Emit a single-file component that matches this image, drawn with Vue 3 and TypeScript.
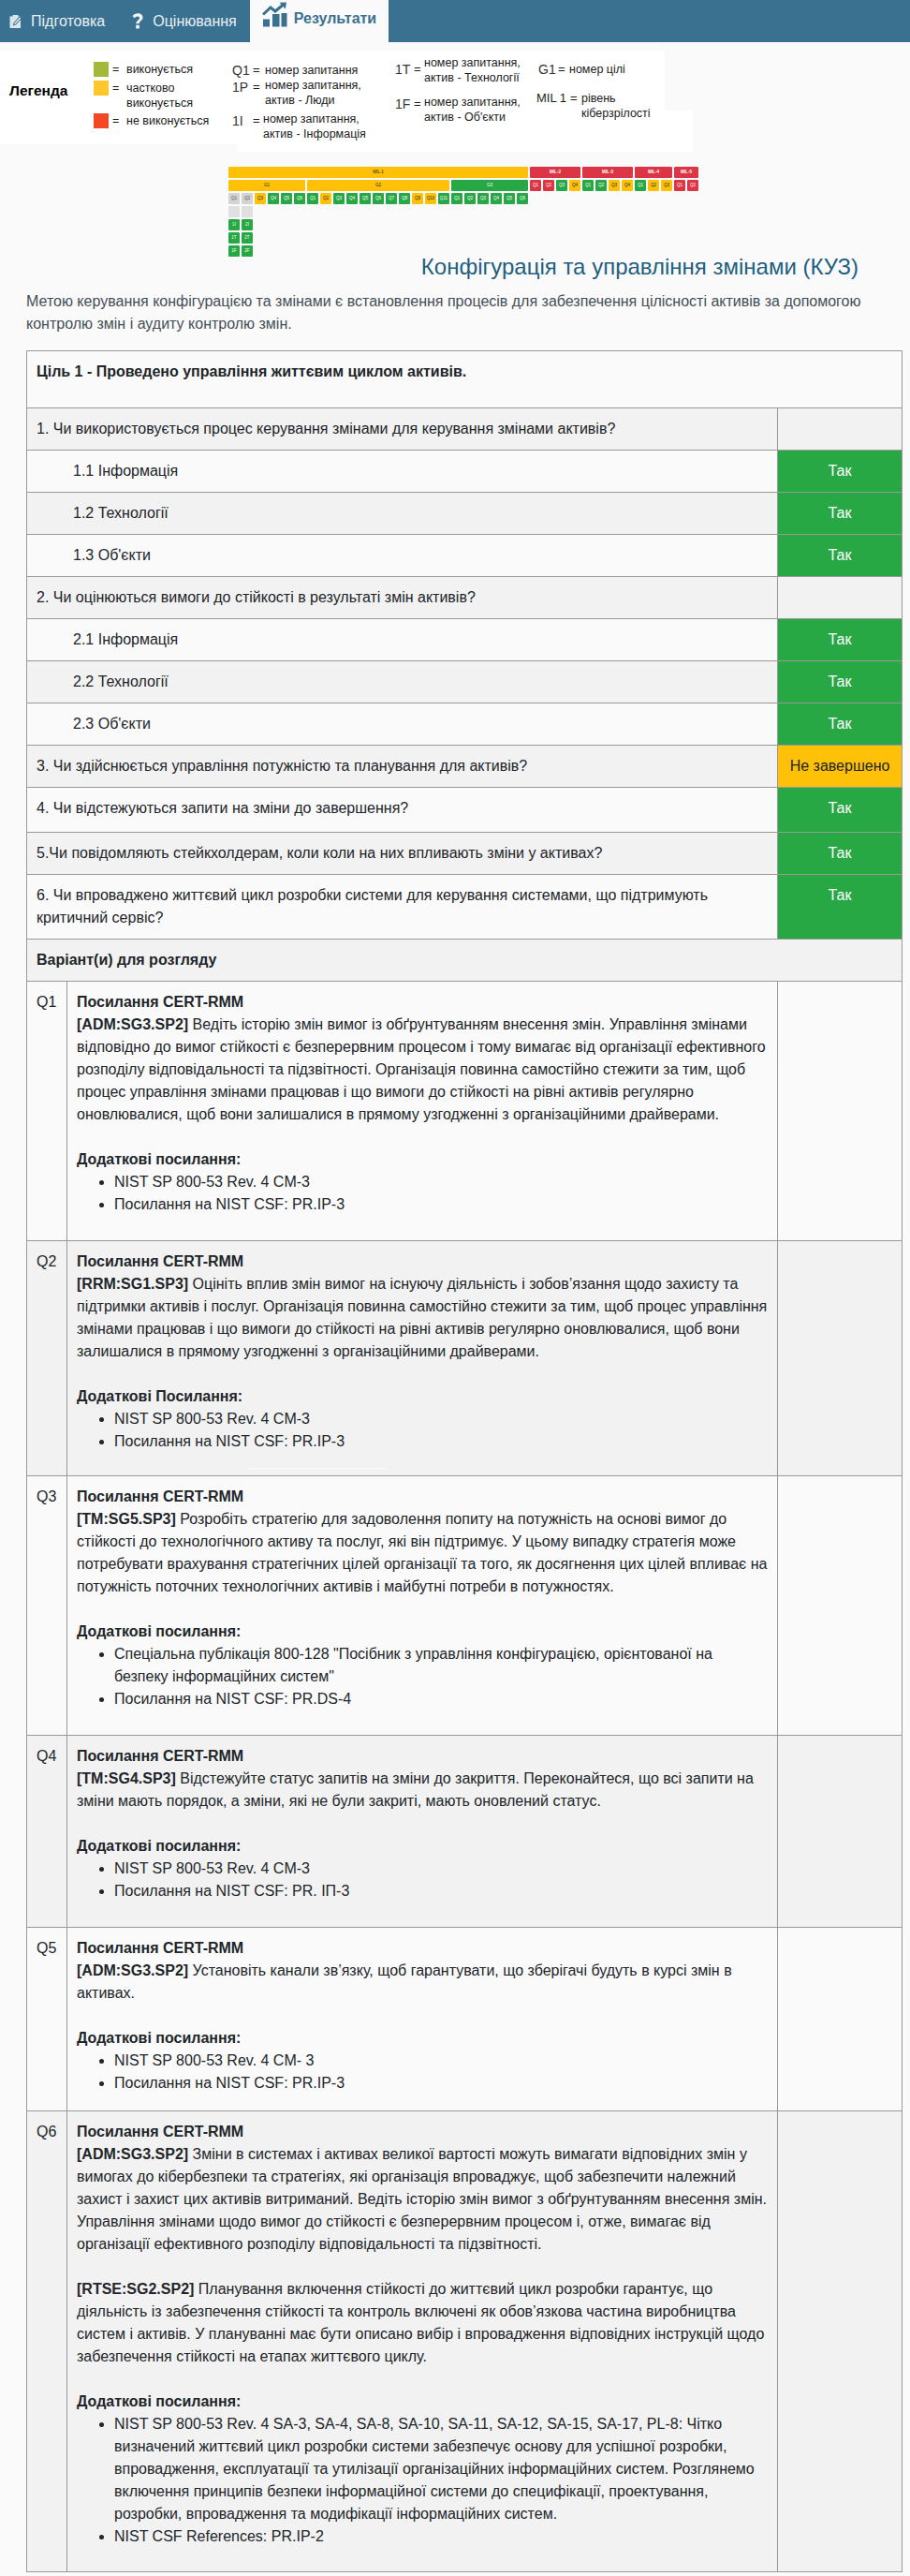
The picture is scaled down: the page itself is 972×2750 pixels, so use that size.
<template>
  <div class="page">
    <nav class="tabs">
      <a class="tab tab--first">
        <svg class="tab__icon" width="16" height="17" viewBox="0 0 16 17">
          <path d="M1.5 3.5h3v-1.500h6v1.500h2.500v12.500h-11.500z" fill="#dbe6eb" />
          <path d="M5.500 10.500l6.500-7.500 2.500 2.200-6.500 7.300-3.200 1z" fill="#3a7191" />
          <path d="M6.500 10.800l5.600-6.300 1 .9-5.600 6.200-1.600.5z" fill="#f4f7f8" />
        </svg>
        Підготовка
      </a>
      <a class="tab tab--second">
        <svg class="tab__icon" width="12" height="17" viewBox="0 0 12 17">
          <path d="M4.400 11.200c-.1-3.400 3.600-3.800 3.600-6 0-1.100-.9-1.800-2.100-1.800-1.300 0-2.300.7-3.100 1.800L.5 3.200C1.800 1.300 3.700.3 6.200.3c3 0 5.300 1.600 5.300 4.500 0 3.400-4 3.800-3.800 6.400zM4.200 12.800h3.700v3.700H4.200z" fill="#f1f5f7" />
        </svg>
        Оцінювання
      </a>
      <a class="tab tab--active">
        <svg class="tab__icon" width="27" height="27" viewBox="0 0 27 27">
          <path d="M1 18.500h7v8H1zM11 13h7.500v13.500H11zM20.500 12H26.500v14.500h-6z" fill="#3a7191" />
          <path d="M1 13.500l8-7.500 5 4 8.500-7" fill="none" stroke="#3a7191" stroke-width="3" />
          <path d="M18.500.8l7.500-.3-1.200 7z" fill="#3a7191" />
        </svg>
        Результати
      </a>
    </nav>

    <section class="legend">
      <strong class="legend__title">Легенда</strong>
      <div class="legend__col legend__col--status">
        <div class="entry entry--status entry--done">
          <i class="swatch swatch--green"></i><span>=</span><span>виконується</span>
        </div>
        <div class="entry entry--status entry--part">
          <i class="swatch swatch--yellow"></i><span>=</span><span>частково<br />виконується</span>
        </div>
        <div class="entry entry--status">
          <i class="swatch swatch--red"></i><span>=</span><span>не виконується</span>
        </div>
      </div>
      <div class="legend__col legend__col--keys">
        <div class="entry entry--key">
          <b class="key">Q1</b><span class="eq">=</span><span>номер запитання</span>
        </div>
        <div class="entry entry--key entry--people">
          <b class="key key--low">1P</b><span class="eq eq--low">=</span><span>номер запитання,<br />актив - Люди</span>
        </div>
        <div class="entry entry--key entry--info">
          <b class="key key--low">1I</b><span class="eq eq--low">=</span><span>номер запитання,<br />актив - Інформація</span>
        </div>
      </div>
      <div class="legend__col legend__col--assets">
        <div class="entry entry--asset entry--tech">
          <b class="key key--tech">1T</b><span class="eq key--tech">=</span><span>номер запитання,<br />актив - Технології</span>
        </div>
        <div class="entry entry--asset">
          <b class="key key--low">1F</b><span class="eq eq--low">=</span><span>номер запитання,<br />актив - Об'єкти</span>
        </div>
      </div>
      <div class="legend__col legend__col--goals">
        <div class="entry entry--goal">
          <b class="key">G1</b><span class="eq">=</span><span>номер цілі</span>
        </div>
        <div class="entry entry--mil">
          <b class="key key--small">MIL 1</b><span class="eq">=</span><span>рівень<br />кіберзрілості</span>
        </div>
      </div>
    </section>

    <section class="chart">
      <div v-for="mil in mils" :key="mil.name" class="mil">
        <div class="bar" :class="'is-' + mil.color">{{ mil.name }}</div>
        <div class="mil__goals">
          <div v-for="(goal, g) in mil.goals" :key="g" class="goal">
            <div v-if="goal.name" class="bar" :class="'is-' + goal.color">{{ goal.name }}</div>
            <div class="goal__cells">
              <div v-for="(q, i) in goal.cells" :key="i" class="stack">
                <div class="cell" :class="'is-' + q.color">{{ q.label }}</div>
                <template v-if="q.subs">
                  <div class="cell is-empty"></div>
                  <div v-for="s in q.subs" :key="s" class="cell is-green">{{ s }}</div>
                </template>
              </div>
            </div>
          </div>
        </div>
      </div>
    </section>

    <h2 class="heading">Конфігурація та управління змінами (КУЗ)</h2>
    <p class="intro">
      Метою керування конфігурацією та змінами є встановлення процесів для забезпечення цілісності активів за
      допомогою контролю змін і аудиту контролю змін.
    </p>

    <table class="sheet">
      <colgroup>
        <col class="sheet__q" />
        <col class="sheet__body" />
        <col class="sheet__state" />
      </colgroup>
      <tbody>
        <tr>
          <td colspan="3" class="goal-row"><strong>Ціль 1 - Проведено управління життєвим циклом активів.</strong></td>
        </tr>
        <tr v-for="row in questions" :key="row.text" :class="{ 'row--tall': row.tall }">
          <td colspan="2" :class="{ sub: row.sub }">{{ row.text }}</td>
          <td class="state" :class="row.state ? 'state--' + row.state : ''">{{ stateText(row.state) }}</td>
        </tr>
        <tr>
          <td colspan="3"><strong>Варіант(и) для розгляду</strong></td>
        </tr>
        <tr v-for="item in refs" :key="item.id">
          <td>{{ item.id }}</td>
          <td>
            <strong>Посилання CERT-RMM</strong>
            <p v-for="p in item.paragraphs" :key="p.code" class="ref-par">
              <strong>{{ p.code }}</strong> {{ p.text }}
            </p>
            <strong>{{ item.moreTitle }}</strong>
            <ul class="ref-list" :style="{ marginBottom: item.tail + 'px' }">
              <li v-for="l in item.links" :key="l">{{ l }}</li>
            </ul>
          </td>
          <td></td>
        </tr>
      </tbody>
    </table>
  </div>
</template>

<script setup lang="ts">
type Color = 'green' | 'yellow' | 'red' | 'grey'
type State = 'yes' | 'partial' | ''

interface Cell { label: string; color: Color; subs?: string[] }
interface Goal { name?: string; color?: Color; cells: Cell[] }
interface Mil { name: string; color: Color; goals: Goal[] }

function cells(colors: string): Cell[] {
  const map: Record<string, Color> = { g: 'green', y: 'yellow', r: 'red', n: 'grey' }
  return colors.split('').map((c, i) => ({ label: 'Q' + (i + 1), color: map[c] }))
}

const firstGoal = cells('nnyggg')
firstGoal[0].subs = ['1I', '1T', '1F']
firstGoal[1].subs = ['2I', '2T', '2F']

const mils: Mil[] = [
  {
    name: 'MIL-1',
    color: 'yellow',
    goals: [
      { name: 'G1', color: 'yellow', cells: firstGoal },
      { name: 'G2', color: 'yellow', cells: cells('gyggggggyyg') },
      { name: 'G3', color: 'green', cells: cells('gggggg') },
    ],
  },
  { name: 'MIL-2', color: 'red', goals: [{ cells: cells('rrgy') }] },
  { name: 'MIL-3', color: 'red', goals: [{ cells: cells('ggyy') }] },
  { name: 'MIL-4', color: 'red', goals: [{ cells: cells('gyy') }] },
  { name: 'MIL-5', color: 'red', goals: [{ cells: cells('rr') }] },
]

const questions: { text: string; state: State; sub?: boolean; tall?: boolean }[] = [
  { text: '1. Чи використовується процес керування змінами для керування змінами активів?', state: '' },
  { text: '1.1 Інформація', state: 'yes', sub: true },
  { text: '1.2 Технології', state: 'yes', sub: true },
  { text: "1.3 Об'єкти", state: 'yes', sub: true },
  { text: '2. Чи оцінюються вимоги до стійкості в результаті змін активів?', state: '' },
  { text: '2.1 Інформація', state: 'yes', sub: true },
  { text: '2.2 Технології', state: 'yes', sub: true },
  { text: "2.3 Об'єкти", state: 'yes', sub: true },
  { text: '3. Чи здійснюється управління потужністю та планування для активів?', state: 'partial' },
  { text: '4. Чи відстежуються запити на зміни до завершення?', state: 'yes', tall: true },
  { text: '5.Чи повідомляють стейкхолдерам, коли коли на них впливають зміни у активах?', state: 'yes' },
  { text: '6. Чи впроваджено життєвий цикл розробки системи для керування системами, що підтримують критичний сервіс?', state: 'yes' },
]

function stateText(state: State): string {
  if (state === 'yes') return 'Так'
  if (state === 'partial') return 'Не завершено'
  return ''
}

const refs = [
  {
    id: 'Q1',
    paragraphs: [
      {
        code: '[ADM:SG3.SP2]',
        text: 'Ведіть історію змін вимог із обґрунтуванням внесення змін. Управління змінами відповідно до вимог стійкості є безперервним процесом і тому вимагає від організації ефективного розподілу відповідальності та підзвітності. Організація повинна самостійно стежити за тим, щоб процес управління змінами працював і що вимоги до стійкості на рівні активів регулярно оновлювалися, щоб вони залишалися в прямому узгодженні з організаційними драйверами.',
      },
    ],
    moreTitle: 'Додаткові посилання:',
    links: ['NIST SP 800-53 Rev. 4 CM-3', 'Посилання на NIST CSF: PR.IP-3'],
    tail: 16,
  },
  {
    id: 'Q2',
    paragraphs: [
      {
        code: '[RRM:SG1.SP3]',
        text: 'Оцініть вплив змін вимог на існуючу діяльність і зобов’язання щодо захисту та підтримки активів і послуг. Організація повинна самостійно стежити за тим, щоб процес управління змінами працював і що вимоги до стійкості на рівні активів регулярно оновлювалися, щоб вони залишалися в прямому узгодженні з організаційними драйверами.',
      },
    ],
    moreTitle: 'Додаткові Посилання:',
    links: ['NIST SP 800-53 Rev. 4 CM-3', 'Посилання на NIST CSF: PR.IP-3'],
    tail: 14,
  },
  {
    id: 'Q3',
    paragraphs: [
      {
        code: '[TM:SG5.SP3]',
        text: 'Розробіть стратегію для задоволення попиту на потужність на основі вимог до стійкості до технологічного активу та послуг, які він підтримує. У цьому випадку стратегія може потребувати врахування стратегічних цілей організації та того, як досягнення цих цілей впливає на потужність поточних технологічних активів і майбутні потреби в потужностях.',
      },
    ],
    moreTitle: 'Додаткові посилання:',
    links: [
      'Спеціальна публікація 800-128 "Посібник з управління конфігурацією, орієнтованої на безпеку інформаційних систем"',
      'Посилання на NIST CSF: PR.DS-4',
    ],
    tail: 16,
  },
  {
    id: 'Q4',
    paragraphs: [
      {
        code: '[TM:SG4.SP3]',
        text: 'Відстежуйте статус запитів на зміни до закриття. Переконайтеся, що всі запити на зміни мають порядок, а зміни, які не були закриті, мають оновлений статус.',
      },
    ],
    moreTitle: 'Додаткові посилання:',
    links: ['NIST SP 800-53 Rev. 4 CM-3', 'Посилання на NIST CSF: PR. ІП-3'],
    tail: 16,
  },
  {
    id: 'Q5',
    paragraphs: [
      {
        code: '[ADM:SG3.SP2]',
        text: 'Установіть канали зв’язку, щоб гарантувати, що зберігачі будуть в курсі змін в активах.',
      },
    ],
    moreTitle: 'Додаткові посилання:',
    links: ['NIST SP 800-53 Rev. 4 CM- 3', 'Посилання на NIST CSF: PR.IP-3'],
    tail: 7,
  },
  {
    id: 'Q6',
    paragraphs: [
      {
        code: '[ADM:SG3.SP2]',
        text: 'Зміни в системах і активах великої вартості можуть вимагати відповідних змін у вимогах до кібербезпеки та стратегіях, які організація впроваджує, щоб забезпечити належний захист і захист цих активів витриманий. Ведіть історію змін вимог з обґрунтуванням внесення змін. Управління змінами щодо вимог до стійкості є безперервним процесом і, отже, вимагає від організації ефективного розподілу відповідальності та підзвітності.',
      },
      {
        code: '[RTSE:SG2.SP2]',
        text: 'Планування включення стійкості до життєвий цикл розробки гарантує, що діяльність із забезпечення стійкості та контроль включені як обов’язкова частина виробництва систем і активів. У плануванні має бути описано вибір і впровадження відповідних інструкцій щодо забезпечення стійкості на етапах життєвого циклу.',
      },
    ],
    moreTitle: 'Додаткові посилання:',
    links: [
      'NIST SP 800-53 Rev. 4 SA-3, SA-4, SA-8, SA-10, SA-11, SA-12, SA-15, SA-17, PL-8: Чітко визначений життєвий цикл розробки системи забезпечує основу для успішної розробки, впровадження, експлуатації та утилізації організаційних інформаційних систем. Розглянемо включення принципів безпеки інформаційної системи до специфікації, проектування, розробки, впровадження та модифікації інформаційних систем.',
      'NIST CSF References: PR.IP-2',
    ],
    tail: 15,
  },
]
</script>

<style>
body { background: #fafafa; }
</style>

<style scoped>
.page { position: relative; width: 972px; font-family: "Liberation Sans", Arial, sans-serif; font-size: 16px; line-height: 24px; color: #212529; }
/* stray rule that sits over the Q2 row */
.page::after { content: ""; position: absolute; top: 1567px; left: 265px; width: 148px; height: 1px; background: #fafafa; }

.tabs { display: flex; height: 45px; background: #3a7191; color: #e9f0f3; }
.tab { display: flex; align-items: center; gap: 8px; height: 45px; }
.tab--first { padding-left: 9px; }
.tab--second { margin-left: 29px; gap: 10px; }
.tab--active { margin-left: 14px; width: 148px; padding: 0 0 0 13px; gap: 7px; box-sizing: border-box; background: #fafafa; color: #3a7191; font-weight: 700; align-items: flex-start; }
.tab--active { line-height: 40px; }
.tab__icon { flex: none; }
.tab--active .tab__icon { margin-top: 2px; }

.legend {
  display: flex; width: 740px; height: 108px; margin-top: 9px; font-size: 12.5px; line-height: 16px; color: #1b1b1b;
  background:
    linear-gradient(#fff, #fff) 0 0 / 710px 64px no-repeat,
    linear-gradient(#fff, #fff) 0 64px / 254px 36px no-repeat,
    linear-gradient(#fff, #fff) 254px 64px / 486px 44px no-repeat;
}
.legend__title { flex: none; width: 100px; box-sizing: border-box; padding: 33px 0 0 10px; font-size: 15.5px; line-height: 20px; color: #000; }
.legend__col { flex: none; }
.legend__col--status { width: 148px; padding-top: 12px; }
.legend__col--keys { width: 174px; padding-top: 13px; }
.legend__col--assets { width: 151px; padding-top: 5px; }
.legend__col--goals { padding-top: 12px; }
.entry { display: grid; }
.entry--status { grid-template-columns: 20px 15px auto; }
.entry--done { margin-bottom: 4px; }
.entry--part { margin-bottom: 3px; }
.entry--key { grid-template-columns: 22px 13px auto; }
.entry--people { margin-bottom: 4px; }
.entry--info { grid-template-columns: 22px 11px auto; }
.entry--asset { grid-template-columns: 20px 11px auto; }
.entry--tech { margin-bottom: 10px; }
.entry--goal { grid-template-columns: 21px 12px auto; padding-left: 2px; margin-bottom: 15px; }
.entry--mil { grid-template-columns: 36px 12px auto; }
.swatch { display: block; width: 16px; height: 16px; }
.swatch--green { background: #a2b93a; }
.swatch--yellow { background: #ffc72c; }
.swatch--red { background: #f44725; }
.key { font-weight: 400; font-size: 14px; color: #333; }
.key--small { font-size: 13px; color: #1b1b1b; }
.eq { font-size: 13px; }
.key--low, .eq--low { padding-top: 2px; }
.key--tech { padding-top: 7px; }

.chart { display: flex; gap: 2px; height: 96px; margin-top: 16px; padding-left: 244px; font-size: 4.6px; line-height: 12px; text-align: center; }
.mil { display: flex; flex-direction: column; gap: 2px; }
.mil__goals { display: flex; gap: 2px; }
.goal { display: flex; flex-direction: column; gap: 2px; }
.goal__cells { display: flex; gap: 2px; }
.stack { display: flex; flex-direction: column; gap: 2px; }
.bar { height: 12px; border-radius: 1.3px; font-weight: 700; }
.cell { width: 12px; height: 12px; border-radius: 1.3px; overflow: hidden; white-space: nowrap; }
.is-green { background: #28a745; color: #fff; }
.is-yellow { background: #ffc107; color: #212529; }
.is-red { background: #dc3545; color: #fff; }
.is-grey { background: #d3d3d3; color: #555; }
.is-empty { background: #e0e0e0; }
.mil > .bar.is-yellow { font-weight: 400; }
.goal > .bar { font-weight: 400; }

.heading { margin: 0 55px 14px 0; font-size: 24px; font-weight: 400; line-height: 22px; text-align: right; color: #1f5f7f; }
.intro { margin: 0 0 16px; padding: 0 9px 0 28px; color: #454f57; }

.sheet { width: 935px; margin-left: 28px; border-collapse: collapse; table-layout: fixed; }
.sheet__q { width: 43px; }
.sheet__body { width: 759px; }
.sheet__state { width: 133px; }
.sheet td { padding: 10px; border: 1px solid #999; vertical-align: top; }
.sheet tr:nth-child(even) { background: #f2f2f2; }
.sheet td.goal-row { padding-bottom: 26px; }
.sheet td.sub { padding-left: 49px; }
.row--tall td { padding-bottom: 13px; }
.state { text-align: center; }
.state--yes { background: #28a745; color: #fff; }
.state--partial { background: #ffc107; color: #212529; }
.ref-par { margin: 0 0 24px; }
.ref-list { margin: 0; padding-left: 40px; }
</style>
